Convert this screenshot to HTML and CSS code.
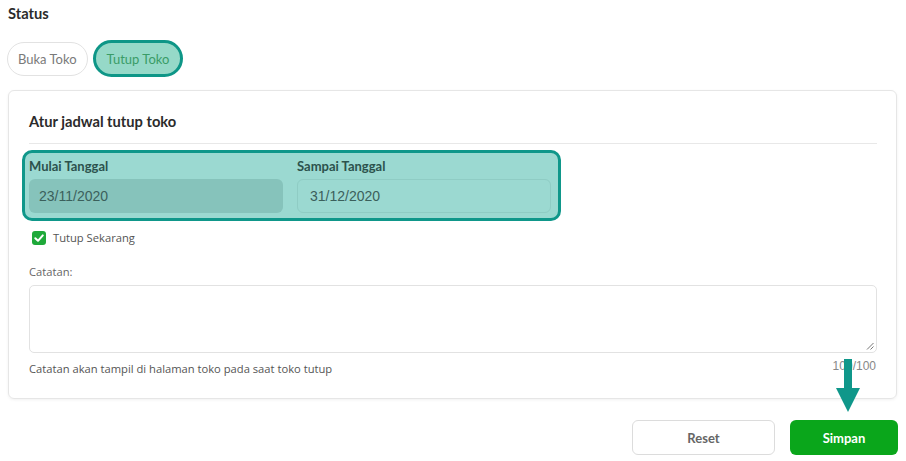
FILE: index.html
```html
<!DOCTYPE html>
<html lang="id">
<head>
<meta charset="utf-8">
<title>Status Toko</title>
<link rel="stylesheet" href="styles.css">
</head>
<body>
<div class="page">
  <h2 class="section-title">Status</h2>
  <div class="pills">
    <button class="pill">Buka Toko</button>
    <button class="pill pill-active">Tutup Toko</button>
  </div>

  <div class="card">
    <h3 class="card-title">Atur jadwal tutup toko</h3>
    <div class="divider"></div>

    <div class="range">
      <div class="field">
        <label class="field-label">Mulai Tanggal</label>
        <div class="input input-dark">23/11/2020</div>
      </div>
      <div class="field">
        <label class="field-label">Sampai Tanggal</label>
        <div class="input input-light">31/12/2020</div>
      </div>
    </div>

    <label class="check">
      <span class="checkbox">
        <svg viewBox="0 0 14 14" width="14" height="14"><path d="M3.3 7.2 L6 9.8 L10.8 4.4" fill="none" stroke="#fff" stroke-width="2" stroke-linecap="round" stroke-linejoin="round"/></svg>
      </span>
      <span class="check-text">Tutup Sekarang</span>
    </label>

    <div class="note-label">Catatan:</div>
    <div class="textarea">
      <svg class="grip" viewBox="0 0 8 8" width="8" height="8"><path d="M7.5 1 L1 7.5 M7.5 4.5 L4.5 7.5" stroke="#777" stroke-width="1"/></svg>
    </div>
    <div class="note-foot">
      <span>Catatan akan tampil di halaman toko pada saat toko tutup</span>
      <span class="counter">100/100</span>
    </div>
  </div>

  <div class="actions">
    <button class="btn btn-reset">Reset</button>
    <button class="btn btn-save">Simpan</button>
  </div>

  <svg class="arrow" viewBox="0 0 24 54" width="24" height="54">
    <rect x="8" y="0" width="8" height="31" fill="#0f978a"/>
    <polygon points="0,29 24,29 12,53" fill="#0f978a"/>
  </svg>
</div>
</body>
</html>
```
FILE: styles.css
```css
* { box-sizing: border-box; }
html, body { margin: 0; padding: 0; background: #fff; }
body { font-family: "Open Sans", "Liberation Sans", sans-serif; color: #555; }

.page {
  position: relative;
  width: 906px;
  height: 461px;
  padding: 4px 9px 0 8px;
}

.section-title {
  margin: 0;
  font-family: Lato, "Open Sans", sans-serif;
  font-weight: 700;
  font-size: 14.7px;
  line-height: 18px;
  color: #2b2b2b;
}

.pills {
  display: flex;
  gap: 6px;
  margin-top: 18px;
  align-items: center;
}
.pill {
  font-family: Lato, "Open Sans", sans-serif;
  font-size: 13px;
  height: 34px;
  padding: 0 10px;
  border-radius: 17px;
  border: 1px solid #e2e2e2;
  background: #fff;
  color: #7a7a7a;
  margin-left: -1px;
}
.pill-active {
  height: 37px;
  border: 3px solid #0e9687;
  background: #96d9c8;
  color: #3a9c67;
  padding: 0 11px;
  border-radius: 19px;
}

.card {
  margin-top: 13px;
  border: 1px solid #e6e6e6;
  border-radius: 6px;
  box-shadow: 0 1px 3px rgba(0,0,0,0.06);
  padding: 0 19px 21px 20px;
}
.card-title {
  margin: 0;
  padding-top: 21px;
  font-family: Lato, "Open Sans", sans-serif;
  font-weight: 700;
  font-size: 14.7px;
  line-height: 18px;
  color: #2b2b2b;
}
.divider {
  height: 1px;
  background: #e8e8e8;
  margin-top: 13px;
}

.range {
  margin-top: 6px;
  margin-left: -7px;
  width: 539px;
  border: 3px solid #0f978a;
  border-radius: 10px;
  background: #9bd9d1;
  padding: 5px 7px 5px 4px;
  display: grid;
  grid-template-columns: 254px 254px;
  column-gap: 14px;
}
.field { display: flex; flex-direction: column; }
.field-label {
  font-family: Lato, "Open Sans", sans-serif;
  font-weight: 700;
  font-size: 13px;
  line-height: 16px;
  color: #2c524d;
}
.input {
  margin-top: 5px;
  height: 34px;
  border-radius: 6px;
  font-family: "Liberation Sans", Arial, sans-serif;
  font-size: 14px;
  line-height: 34px;
  padding-left: 10px;
  color: #3b605b;
}
.input-dark { background: #86c3bb; }
.input-light { background: #9bd9d1; border: 1px solid #8fccc4; line-height: 32px; padding-left: 12px; }

.check {
  display: flex;
  align-items: center;
  gap: 7px;
  margin-top: 10px;
  margin-left: 3px;
}
.checkbox {
  width: 14px;
  height: 14px;
  border-radius: 3px;
  background: #1fa93a;
  display: flex;
}
.check-text { font-size: 11.2px; line-height: 14px; color: #555; }

.note-label {
  margin-top: 19px;
  font-size: 11.2px;
  line-height: 16px;
  color: #666;
}
.textarea {
  position: relative;
  margin-top: 5px;
  height: 68px;
  border: 1px solid #e2e2e2;
  border-radius: 5px;
}
.grip { position: absolute; right: 2px; bottom: 2px; }

.note-foot {
  display: flex;
  justify-content: space-between;
  align-items: flex-start;
  margin-top: 8px;
  font-size: 11.2px;
  line-height: 16px;
  color: #555;
}
.counter {
  font-family: "Liberation Sans", Arial, sans-serif;
  font-size: 12px;
  color: #888;
  margin-top: -3px;
  margin-right: 1px;
}

.actions {
  display: flex;
  justify-content: flex-end;
  gap: 15px;
  margin-top: 21px;
  margin-right: -1px;
}
.btn {
  height: 35px;
  border-radius: 6px;
  font-family: Lato, "Open Sans", sans-serif;
  font-weight: 700;
  font-size: 13px;
}
.btn-reset {
  width: 143px;
  background: #fff;
  border: 1px solid #dcdcdc;
  color: #666;
}
.btn-save {
  width: 108px;
  background: #0aa61b;
  border: none;
  color: #fff;
}

.arrow {
  position: absolute;
  left: 836px;
  top: 359px;
}
```
